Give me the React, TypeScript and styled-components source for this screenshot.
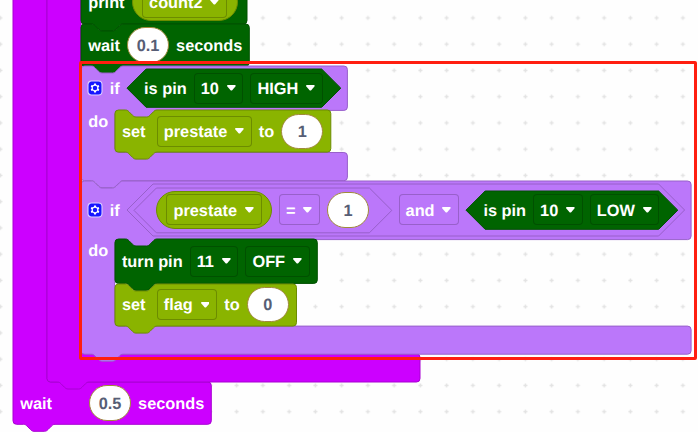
import React from "react";
import styled, { createGlobalStyle } from "styled-components";

type Tone = { fill: string; edge: string };

const tones: Record<"loop" | "logic" | "pin" | "data", Tone> = {
  loop: { fill: "#cc00ff", edge: "#a800d2" },
  logic: { fill: "#bb77fa", edge: "#9860ca" },
  pin: { fill: "#006400", edge: "#005000" },
  data: { fill: "#8ab400", edge: "#6c8c00" },
};

const GlobalStyle = createGlobalStyle`
  body { margin: 0; background: #fefefe; }
  * { box-sizing: border-box; }
`;

const Workspace = styled.main`
  position: relative;
  width: 698px;
  height: 432px;
  overflow: hidden;
  background: #fefefe;
  font: bold 16.33px/20px "Liberation Sans", Arial, sans-serif;
  color: #fff;
  text-rendering: geometricPrecision;
  white-space: nowrap;
`;

const GridDots = styled.svg`
  position: absolute;
  inset: 0;
`;

const Script = styled.div`
  position: absolute;
  left: 13.1px;
  top: -68px;
`;

const Highlight = styled.div`
  position: absolute;
  left: 79px;
  top: 61px;
  width: 618px;
  height: 299px;
  border: 3px solid #ff1e10;
  border-radius: 2px;
`;

const BlockBox = styled.div`
  position: relative;
`;

const Backdrop = styled.svg`
  position: absolute;
  left: 0;
  top: 0;
  overflow: visible;
`;

const Row = styled.div<{ $h: number; $w: number }>`
  position: relative;
  display: flex;
  align-items: center;
  gap: 7px;
  width: ${(p) => p.$w}px;
  height: ${(p) => p.$h}px;
  padding: 0 7.2px;
`;

const Mouth = styled.div<{ $indent: number; $h: number }>`
  position: relative;
  display: grid;
  grid-template-columns: ${(p) => p.$indent}px auto;
  align-items: start;
  height: ${(p) => p.$h}px;
`;

const Spine = styled.div`
  padding: 1.5px 0 0 7.2px;
`;

const Label = styled.span<{ $after?: number }>`
  flex: none;
  padding-top: 1.3px;
  margin-right: ${(p) => p.$after ?? 0}px;
`;

const FieldBox = styled.span<{ $edge: string }>`
  flex: none;
  display: flex;
  align-items: center;
  gap: 7.9px;
  height: 31px;
  padding: 0 7.9px 0 7px;
  border-radius: 4px;
  box-shadow: inset 0 0 0 1px ${(p) => p.$edge};
`;

const Pill = styled.span`
  flex: none;
  display: flex;
  align-items: center;
  height: 38px;
  padding: 0 9.5px;
  border: 1px solid ${tones.data.edge};
  border-radius: 19px;
  background: ${tones.data.fill};
`;

const NumberBox = styled.span`
  flex: none;
  display: flex;
  align-items: center;
  justify-content: center;
  width: 42px;
  height: 35.5px;
  border: 1px solid #a08a3c;
  border-radius: 18px;
  background: #fff;
  color: #575e75;
`;

const HexBox = styled.span<{ $w: number; $h: number; $pad: number }>`
  position: relative;
  flex: none;
  display: flex;
  align-items: center;
  gap: 7px;
  width: ${(p) => p.$w}px;
  height: ${(p) => p.$h}px;
  padding: 0 ${(p) => p.$pad}px;
  > span { position: relative; }
`;

const Gear = styled.svg`
  flex: none;
  margin-right: 0.5px;
`;

const NOTCH_DOWN =
  "c1.75,0 2.6,.9 3.5,1.75 l3.5,3.5 c.9,.9 1.75,1.75 3.5,1.75 h10.5 c1.75,0 2.6,-.9 3.5,-1.75 l3.5,-3.5 c.9,-.9 1.75,-1.75 3.5,-1.75";
const NOTCH_BACK =
  "c-1.75,0 -2.6,.9 -3.5,1.75 l-3.5,3.5 c-.9,.9 -1.75,1.75 -3.5,1.75 h-10.5 c-1.75,0 -2.6,-.9 -3.5,-1.75 l-3.5,-3.5 c-.9,-.9 -1.75,-1.75 -3.5,-1.75";
const R = 3.5;
const TOP_EDGE = `M0,${R} a${R},${R} 0 0 1 ${R},-${R} H10.5 ${NOTCH_DOWN}`;
const BOTTOM_EDGE = `H42 ${NOTCH_BACK} H${R} a${R},${R} 0 0 1 -${R},-${R} Z`;
const rightSide = (w: number, bottom: number) =>
  `H${w - R} a${R},${R} 0 0 1 ${R},${R} V${bottom - R} a${R},${R} 0 0 1 -${R},${R}`;

function statementPath(w: number, h: number) {
  return `${TOP_EDGE} ${rightSide(w, h)} ${BOTTOM_EDGE}`;
}

function wrapPath(w: number, head: number, body: number, footW: number, foot: number, indent: number) {
  const mouthEnd = head + body;
  return [
    TOP_EDGE,
    rightSide(w, head),
    `H${indent + 42} ${NOTCH_BACK} H${indent + R} a${R},${R} 0 0 0 -${R},${R}`,
    `V${mouthEnd - R} a${R},${R} 0 0 0 ${R},${R}`,
    rightSide(footW, mouthEnd + foot),
    BOTTOM_EDGE,
  ].join(" ");
}

function Outline({ d, tone }: { d: string; tone: Tone }) {
  return (
    <Backdrop width="1" height="1" aria-hidden>
      <path d={d} fill={tone.fill} stroke={tone.edge} strokeWidth="1" />
    </Backdrop>
  );
}

function Statement({ w, h, tone, children }: { w: number; h: number; tone: Tone; children: React.ReactNode }) {
  return (
    <BlockBox>
      <Outline d={statementPath(w, h)} tone={tone} />
      <Row $w={w} $h={h}>{children}</Row>
    </BlockBox>
  );
}

type WrapProps = {
  w: number;
  head: number;
  body: number;
  footW: number;
  foot: number;
  indent: number;
  tone: Tone;
  header?: React.ReactNode;
  side?: string;
  footer?: React.ReactNode;
  children: React.ReactNode;
};

function WrapBlock({ w, head, body, footW, foot, indent, tone, header, side, footer, children }: WrapProps) {
  return (
    <BlockBox>
      <Outline d={wrapPath(w, head, body, footW, foot, indent)} tone={tone} />
      <Row $w={w} $h={head}>{header}</Row>
      <Mouth $indent={indent} $h={body}>
        <Spine>{side}</Spine>
        <div>{children}</div>
      </Mouth>
      <Row $w={footW} $h={foot}>{footer}</Row>
    </BlockBox>
  );
}

function Hex({ w, h, pad, tone, children }: { w: number; h: number; pad: number; tone: Tone; children: React.ReactNode }) {
  const m = h / 2;
  return (
    <HexBox $w={w} $h={h} $pad={pad}>
      <Outline d={`M0,${m} L${m},0 H${w - m} L${w},${m} L${w - m},${h} H${m} Z`} tone={tone} />
      {children}
    </HexBox>
  );
}

function Field({ tone, children }: { tone: Tone; children: React.ReactNode }) {
  return (
    <FieldBox $edge={tone.edge}>
      <Label>{children}</Label>
      <svg width="8.75" height="6" viewBox="0 0 8.75 6" aria-hidden>
        <path d="M.9,0 H7.85 C8.7,0 9,.8 8.4,1.5 L5.2,5.2 Q4.4,6 3.55,5.2 L.35,1.5 C-.25,.8 .05,0 .9,0 Z" fill="#fff" />
      </svg>
    </FieldBox>
  );
}

function NumberPill({ children }: { children: React.ReactNode }) {
  return (
    <NumberBox>
      <Label>{children}</Label>
    </NumberBox>
  );
}

function GearButton() {
  return (
    <Gear width="14" height="14" viewBox="0 0 16 16" overflow="visible" aria-hidden>
      <rect width="16" height="16" rx="4" fill="#1616ff" stroke="#ddd0ff" strokeWidth="1.2" />
      <path
        fill="#fff"
        d="m4.203,7.296 0,1.368 -0.92,0.677 -0.11,0.41 0.9,1.559 0.41,0.11 1.043,-0.457 1.187,0.683 0.127,1.134 0.3,0.3 1.8,0 0.3,-0.299 0.127,-1.138 1.185,-0.682 1.046,0.458 0.409,-0.11 0.9,-1.559 -0.11,-0.41 -0.92,-0.677 0,-1.366 0.92,-0.677 0.11,-0.41 -0.9,-1.559 -0.409,-0.109 -1.046,0.458 -1.185,-0.682 -0.127,-1.138 -0.3,-0.299 -1.8,0 -0.3,0.3 -0.126,1.135 -1.187,0.682 -1.043,-0.457 -0.41,0.11 -0.899,1.559 0.108,0.409z"
      />
      <circle cx="8" cy="8" r="2.6" fill="#1616ff" />
    </Gear>
  );
}

function PinCheck({ w, level }: { w: number; level: string }) {
  return (
    <Hex w={w} h={38.3} pad={17.3} tone={tones.pin}>
      <Label>is pin</Label>
      <Field tone={tones.pin}>10</Field>
      <Field tone={tones.pin}>{level}</Field>
    </Hex>
  );
}

export default function App() {
  return (
    <>
      <GlobalStyle />
      <Workspace>
        <GridDots width="698" height="432" aria-hidden>
          <defs>
            <pattern id="dots" x="-12.7" y="4.8" width="26.25" height="26.25" patternUnits="userSpaceOnUse">
              <path d="M11.1,13.1 h4 M13.1,11.1 v4" stroke="#e3e3e3" strokeWidth="1.5" />
            </pattern>
          </defs>
          <rect width="698" height="432" fill="url(#dots)" />
        </GridDots>
        <Script>
          <WrapBlock
            w={300} head={24} body={426} footW={198.3} foot={42.3} indent={34} tone={tones.loop}
            footer={
              <>
                <Label $after={30}>wait</Label>
                <NumberPill>0.5</NumberPill>
                <Label>seconds</Label>
              </>
            }
          >
            <WrapBlock w={300} head={24} body={373.9} footW={373} foot={28.1} indent={34} tone={tones.loop}>
              <Statement w={166} h={44} tone={tones.pin}>
                <Label>print</Label>
                <Pill><Field tone={tones.data}>count2</Field></Pill>
              </Statement>
              <Statement w={168.3} h={42} tone={tones.pin}>
                <Label>wait</Label>
                <NumberPill>0.1</NumberPill>
                <Label>seconds</Label>
              </Statement>
              <WrapBlock
                w={266.4} head={44.4} body={42.1} footW={266.4} foot={28.2} indent={33.6} tone={tones.logic} side="do"
                header={
                  <>
                    <GearButton />
                    <Label>if</Label>
                    <PinCheck w={213.8} level="HIGH" />
                  </>
                }
              >
                <Statement w={215.8} h={42.1} tone={tones.data}>
                  <Label $after={4.3}>set</Label>
                  <Field tone={tones.data}>prestate</Field>
                  <Label>to</Label>
                  <NumberPill>1</NumberPill>
                </Statement>
              </WrapBlock>
              <WrapBlock
                w={610.1} head={58.6} body={86.5} footW={610.1} foot={28.1} indent={33.6} tone={tones.logic} side="do"
                header={
                  <>
                    <GearButton />
                    <Label>if</Label>
                    <Hex w={557.6} h={52} pad={7} tone={tones.logic}>
                      <Hex w={257.8} h={44.8} pad={22.2} tone={tones.logic}>
                        <Pill><Field tone={tones.data}>prestate</Field></Pill>
                        <Field tone={tones.logic}>=</Field>
                        <NumberPill>1</NumberPill>
                      </Hex>
                      <Field tone={tones.logic}>and</Field>
                      <PinCheck w={211.8} level="LOW" />
                    </Hex>
                  </>
                }
              >
                <Statement w={202.3} h={44.4} tone={tones.pin}>
                  <Label>turn pin</Label>
                  <Field tone={tones.pin}>11</Field>
                  <Field tone={tones.pin}>OFF</Field>
                </Statement>
                <Statement w={181.5} h={42.1} tone={tones.data}>
                  <Label $after={4.3}>set</Label>
                  <Field tone={tones.data}>flag</Field>
                  <Label>to</Label>
                  <NumberPill>0</NumberPill>
                </Statement>
              </WrapBlock>
            </WrapBlock>
          </WrapBlock>
        </Script>
        <Highlight />
      </Workspace>
    </>
  );
}
